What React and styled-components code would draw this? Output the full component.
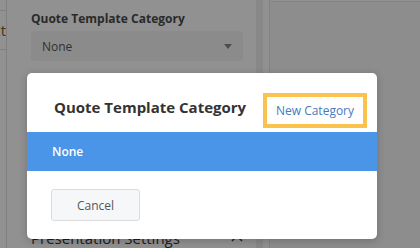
import React from 'react';
import styled, { createGlobalStyle } from 'styled-components';

const GlobalStyle = createGlobalStyle`
  html, body {
    margin: 0;
    padding: 0;
    width: 420px;
    height: 248px;
    overflow: hidden;
    font-family: "Open Sans", "Liberation Sans", sans-serif;
  }
`;

const Page = styled.div`
  position: relative;
  display: flex;
  width: 420px;
  height: 248px;
  overflow: hidden;
  background: #fff;
`;

const LeftNav = styled.div`
  flex: 0 0 6px;
  border-right: 1px solid #e2e2e2;
  padding-top: 10px;
  overflow: hidden;
`;

const NavItem = styled.div`
  display: flex;
  justify-content: flex-end;
  height: 38px;
  border-top: 1px solid #e4e4e4;
  border-bottom: 1px solid #e4e4e4;
  align-items: center;
  font-size: 15px;
  color: #8a5a1c;
  white-space: nowrap;
`;

const Panel = styled.div`
  flex: 0 0 225px;
  display: flex;
  flex-direction: column;
  padding: 11px 0 0 24px;
`;

const FieldLabel = styled.div`
  font-size: 12px;
  line-height: 16px;
  font-weight: 700;
  color: #4a4a4a;
`;

const Select = styled.div`
  margin-top: 4px;
  width: 212px;
  height: 31px;
  box-sizing: border-box;
  display: flex;
  align-items: center;
  justify-content: space-between;
  padding: 0 11px;
  background: #f5f5f5;
  border-radius: 3px;
  font-size: 12px;
  color: #555;
`;

const Caret = styled.span`
  width: 0;
  height: 0;
  border-left: 4px solid transparent;
  border-right: 4px solid transparent;
  border-top: 5px solid #888;
`;

const SectionRow = styled.div`
  margin-top: 167px;
  width: 212px;
  display: flex;
  align-items: center;
  justify-content: space-between;
  font-size: 15px;
  line-height: 20px;
  color: #333;
`;

const ScrollTrack = styled.div`
  flex: 0 0 7px;
  background: #f0f0f0;
`;

const Gutter = styled.div`
  flex: 0 0 6px;
  border-right: 1px solid #e6e6e6;
`;

const RightArea = styled.div`
  flex: 1;
  margin-top: 1px;
  border-top: 1px solid #e9e9e9;
  background: #f8f8f8;
`;

const Backdrop = styled.div`
  position: absolute;
  inset: 0;
  background: rgba(0, 0, 0, 0.43);
`;

const Modal = styled.div`
  position: absolute;
  left: 27px;
  top: 73px;
  width: 350px;
  height: 166px;
  background: #fff;
  border-radius: 5px;
  overflow: hidden;
  box-shadow: 0 2px 8px rgba(0, 0, 0, 0.2);
  display: flex;
  flex-direction: column;
`;

const ModalHeader = styled.div`
  height: 59px;
  box-sizing: border-box;
  display: flex;
  align-items: flex-start;
  justify-content: space-between;
  padding: 20px 10px 0 27px;
`;

const Title = styled.h2`
  margin: 4px 0 0;
  font-size: 15px;
  line-height: 20px;
  font-weight: 700;
  color: #333;
`;

const LinkButton = styled.button`
  width: 104px;
  height: 35px;
  box-sizing: border-box;
  border: 4px solid #fbc24e;
  background: #fff;
  padding: 0;
  font-family: inherit;
  font-size: 12px;
  color: #4679c2;
  cursor: pointer;
`;

const OptionRow = styled.div`
  height: 39px;
  display: flex;
  align-items: center;
  padding-left: 25px;
  background: ${({ selected }) => (selected ? '#4a95e8' : '#fff')};
  color: ${({ selected }) => (selected ? '#fff' : '#333')};
  font-size: 12px;
  font-weight: 600;
`;

const Footer = styled.div`
  flex: 1;
  padding: 18px 0 0 24px;
`;

const Button = styled.button`
  width: 89px;
  height: 32px;
  box-sizing: border-box;
  border: 1px solid #dcdcdc;
  border-radius: 3px;
  background: #f6f7f9;
  font-family: inherit;
  font-size: 12px;
  color: #555;
  cursor: pointer;
`;

export default function App() {
  return (
    <>
      <GlobalStyle />
      <Page>
        <LeftNav>
          <NavItem>Text</NavItem>
        </LeftNav>
        <Panel>
          <FieldLabel>Quote Template Category</FieldLabel>
          <Select>
            None
            <Caret />
          </Select>
          <SectionRow>
            Presentation Settings
            <svg width="12" height="8" viewBox="0 0 12 8">
              <path d="M1 7 L6 2 L11 7" fill="none" stroke="#444" strokeWidth="1.6" />
            </svg>
          </SectionRow>
        </Panel>
        <ScrollTrack />
        <Gutter />
        <RightArea />
        <Backdrop />
        <Modal>
          <ModalHeader>
            <Title>Quote Template Category</Title>
            <LinkButton>New Category</LinkButton>
          </ModalHeader>
          <OptionRow selected>None</OptionRow>
          <Footer>
            <Button>Cancel</Button>
          </Footer>
        </Modal>
      </Page>
    </>
  );
}
